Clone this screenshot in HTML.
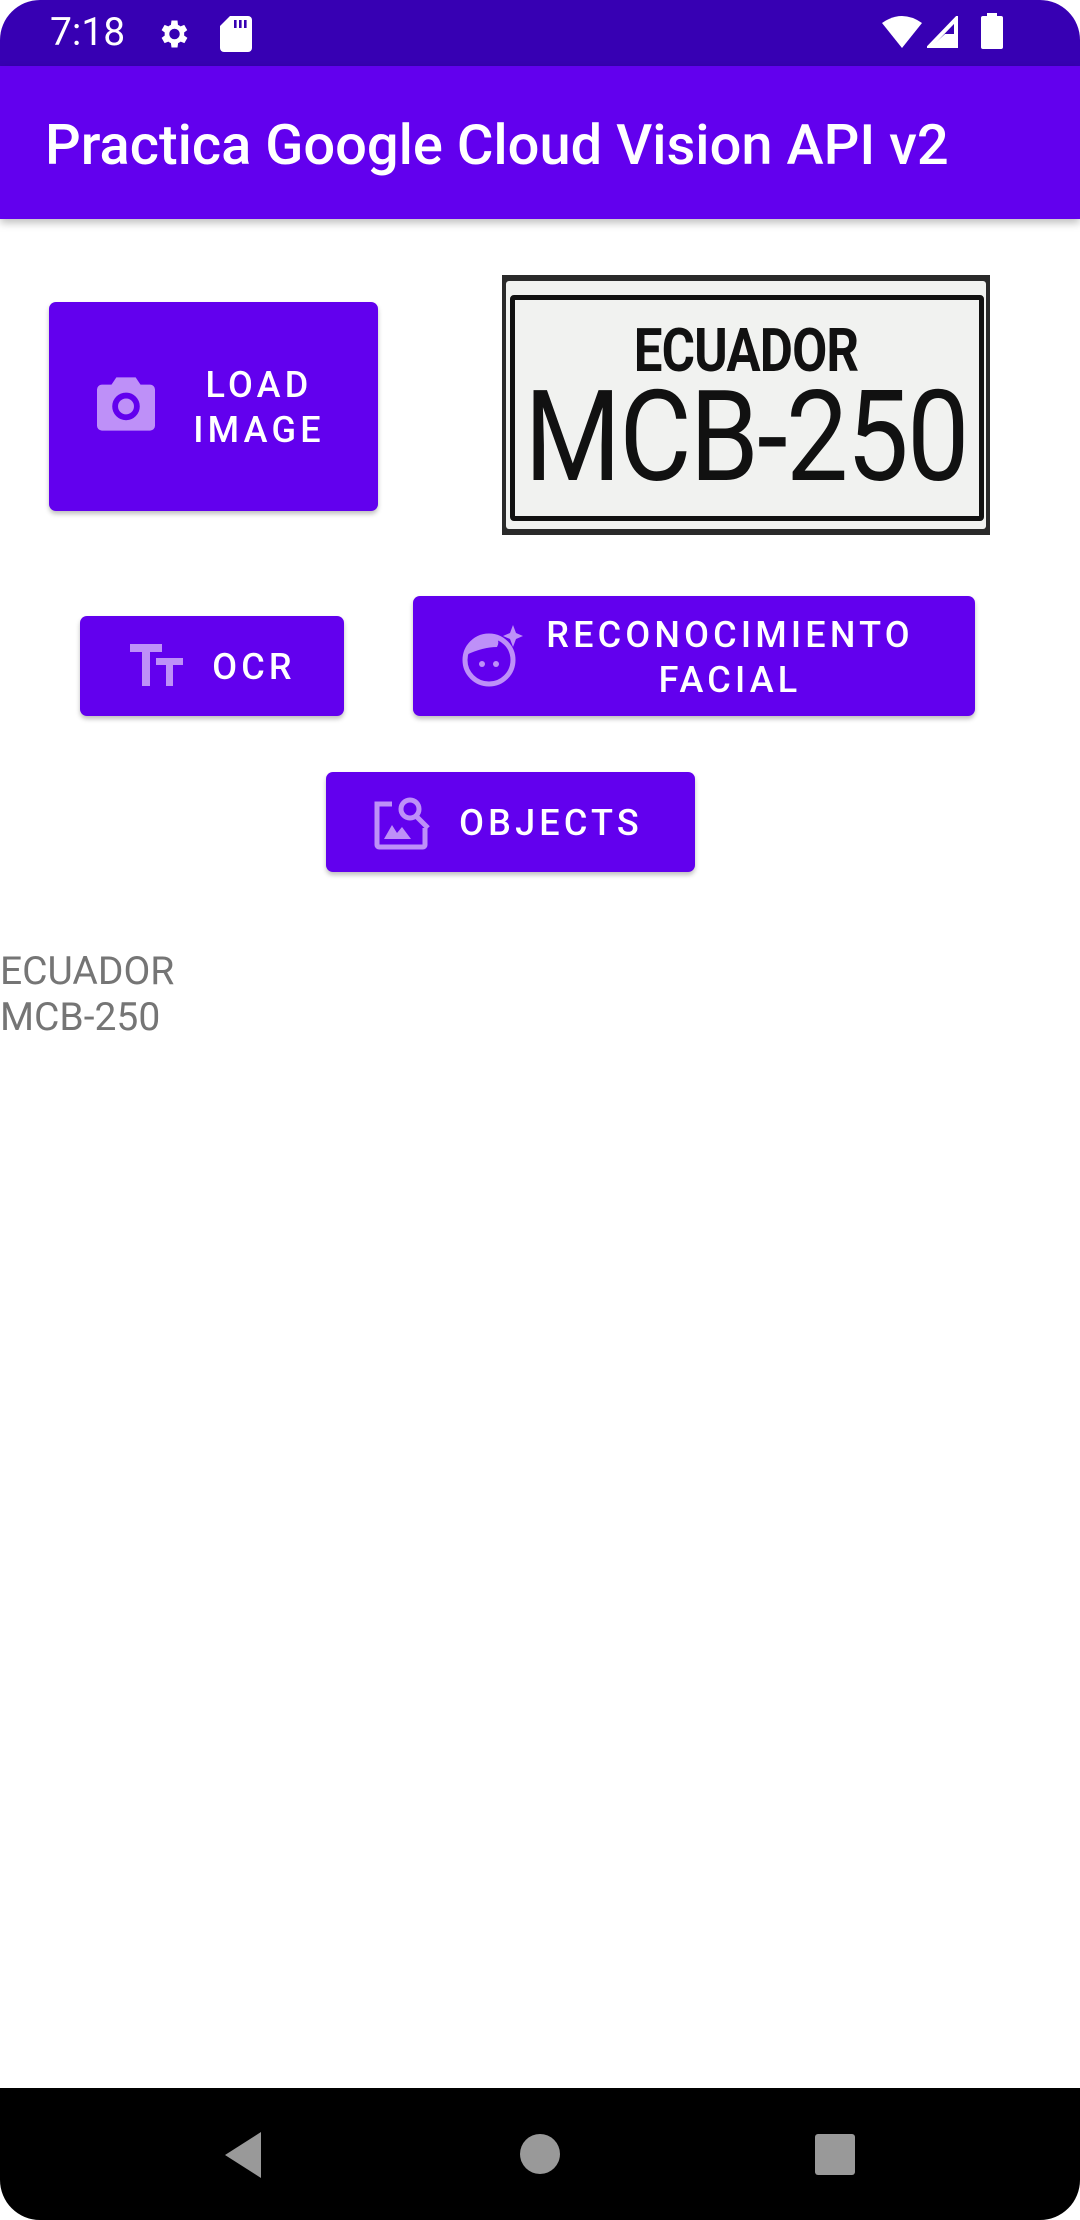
<!DOCTYPE html>
<html><head><meta charset="utf-8"><style>
*{margin:0;padding:0;box-sizing:border-box}
body{width:1080px;height:2220px;background:#fff;position:relative;overflow:hidden;font-family:"Roboto","Liberation Sans",sans-serif}
.status{position:absolute;left:0;top:0;width:1080px;height:66px;background:#3700B3;border-radius:40px 40px 0 0}
.appbar{position:absolute;left:0;top:66px;width:1080px;height:153px;background:#6200EE;box-shadow:0 4px 8px rgba(0,0,0,.25)}
.title{position:absolute;left:45px;top:112px;color:#fff;font-size:56px;font-weight:500;line-height:66px;white-space:nowrap}
.btn{position:absolute;background:#6200EE;border-radius:7px;box-shadow:0 3px 5px rgba(0,0,0,.25);color:#fff;font-weight:500;font-size:36px;letter-spacing:4.2px;line-height:45px;text-align:center;white-space:nowrap}
.btn span{position:absolute}
.nav{position:absolute;left:0;top:2088px;width:1080px;height:132px;background:#000;border-radius:0 0 40px 40px}
</style></head><body>
<div class="status">
 <div style="position:absolute;left:50px;top:9px;color:#fff;font-size:39px;line-height:46px">7:18</div>
 <svg style="position:absolute;left:155px;top:16px" width="36" height="36" viewBox="0 0 24 24"><path fill="#fff" d="M19.4 13a7.5 7.5 0 000-2l2.1-1.6-2-3.5-2.5 1a7 7 0 00-1.7-1L15 3h-4l-.4 2.9a7 7 0 00-1.7 1l-2.5-1-2 3.5L6.5 11a7.5 7.5 0 000 2l-2.1 1.6 2 3.5 2.5-1a7 7 0 001.7 1L11 21h4l.4-2.9a7 7 0 001.7-1l2.5 1 2-3.5zM13 15.5a3.5 3.5 0 110-7 3.5 3.5 0 010 7z"/></svg>
 <svg style="position:absolute;left:220px;top:16px" width="32" height="36" viewBox="0 0 16 18"><path fill="#fff" d="M5 0h9a2 2 0 012 2v14a2 2 0 01-2 2H2a2 2 0 01-2-2V5z"/><path fill="#3700B3" d="M7 2h1.3v4H7zM9.5 2h1.3v4H9.5zM12 2h1.3v4H12z"/></svg>
 <svg style="position:absolute;left:882px;top:16px" width="40" height="32" viewBox="0 0 40 32"><path fill="#fff" d="M0 7Q20-7 40 7L20 32z"/></svg>
 <svg style="position:absolute;left:927px;top:16px" width="32" height="32" viewBox="0 0 32 32"><path fill="none" stroke="#fff" stroke-width="4" d="M29 3v27H3z"/><path fill="#fff" d="M18 18h11v12H5z"/></svg>
 <div style="position:absolute;left:981px;top:16px;width:22px;height:33px;background:#fff;border-radius:2px"></div>
 <div style="position:absolute;left:987px;top:13px;width:10px;height:5px;background:#fff"></div>
</div>
<div class="appbar"></div>
<div class="title">Practica Google Cloud Vision API v2</div>

<div class="btn" style="left:49px;top:302px;width:329px;height:209px">
 <svg style="position:absolute;left:48px;top:74px" width="58" height="56" viewBox="0 0 24 22"><path fill="#BE90F8" d="M8 0h8l2 3h4a2 2 0 012 2v15a2 2 0 01-2 2H2a2 2 0 01-2-2V5a2 2 0 012-2h4z"/><circle cx="12" cy="12" r="4.5" fill="none" stroke="#6200EE" stroke-width="2.4"/></svg>
 <span style="left:130px;top:61px;width:160px">LOAD<br>IMAGE</span>
</div>

<div style="position:absolute;left:502px;top:275px;width:488px;height:260px;background:#2a2a2a">
 <div style="position:absolute;left:4px;top:6px;right:4px;bottom:6px;background:#f1f2f0;border-radius:3px"></div>
 <div style="position:absolute;left:8px;top:20px;width:474px;height:226px;border:5px solid #111;border-radius:4px"></div>
 <div style="position:absolute;left:0;width:100%;top:40px;text-align:center;font-size:60px;color:#111;transform:scaleX(.85);font-weight:bold;letter-spacing:-1px;white-space:nowrap">ECUADOR</div>
 <div style="position:absolute;left:-40px;width:568px;top:92px;text-align:center;font-size:126px;line-height:140px;color:#111;transform:scaleX(.88);letter-spacing:-2px;white-space:nowrap">MCB-250</div>
</div>

<div class="btn" style="left:80px;top:616px;width:264px;height:100px">
 <svg style="position:absolute;left:50px;top:28px" width="54" height="42" viewBox="0 0 54 42"><path fill="#BE90F8" d="M0 0h32v8H20v34h-8V8H0zM26 14h27v7H43v21h-7V21H26z"/></svg>
 <span style="left:104px;top:29px;width:140px">OCR</span>
</div>

<div class="btn" style="left:413px;top:596px;width:562px;height:120px">
 <svg style="position:absolute;left:48px;top:29px" width="62" height="62" viewBox="0 0 62 62"><circle cx="28" cy="35" r="24" fill="none" stroke="#BE90F8" stroke-width="5"/><path fill="#BE90F8" d="M5 30Q10 8 32 10q8 5 4 12-14 0-31 8z"/><circle cx="21" cy="39" r="3" fill="#BE90F8"/><circle cx="35" cy="39" r="3" fill="#BE90F8"/><path fill="#BE90F8" d="M52 0l3 8 7 3-7 3-3 8-3-8-7-3 7-3z"/></svg>
 <span style="left:112px;top:17px;width:410px">RECONOCIMIENTO<br>FACIAL</span>
</div>

<div class="btn" style="left:326px;top:772px;width:369px;height:100px">
 <svg style="position:absolute;left:48px;top:22px" width="58" height="56" viewBox="0 0 58 56"><path fill="none" stroke="#BE90F8" stroke-width="5" d="M18 10H3v41a2 2 0 002 2h44a2 2 0 002-2V34"/><circle cx="36" cy="15" r="9" fill="none" stroke="#BE90F8" stroke-width="5"/><path stroke="#BE90F8" stroke-width="5" d="M42 22l12 12"/><path fill="#BE90F8" d="M10 45l8-14 5 8 5-6 9 12z"/></svg>
 <span style="left:120px;top:29px;width:210px">OBJECTS</span>
</div>

<div style="position:absolute;left:0;top:948px;color:#757575;font-size:39px;line-height:46px">ECUADOR<br>MCB-250</div>

<div class="nav">
 <svg style="position:absolute;left:224px;top:44px" width="38" height="46" viewBox="0 0 38 46"><path fill="#999" d="M37 0v46L1 23z"/></svg>
 <div style="position:absolute;left:520px;top:46px;width:40px;height:40px;border-radius:50%;background:#999"></div>
 <div style="position:absolute;left:815px;top:46px;width:40px;height:41px;border-radius:3px;background:#999"></div>
</div>
</body></html>
